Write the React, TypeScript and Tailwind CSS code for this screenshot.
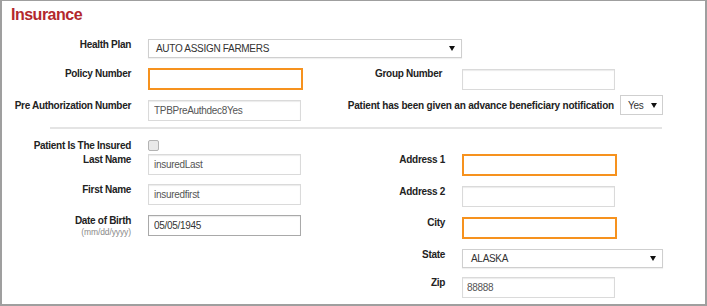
import React from "react";

const FONT = { fontFamily: '"Liberation Sans", Arial, sans-serif' };

function Label({ children, w, sub }: { children: React.ReactNode; w: string; sub?: string }) {
  return (
    <div className={`${w} shrink-0 text-right`}>
      <div className="text-[10px] leading-[11px] tracking-[-0.3px] font-bold text-[#222]">{children}</div>
      {sub && <div className="text-[8.5px] leading-[10px] tracking-[-0.1px] text-[#8a8a8a] mt-[1px]">{sub}</div>}
    </div>
  );
}

function TextBox({ value = "", orange = false, dark = false, w = "w-[153px]", pl = "pl-[5px]", color = "text-[#555]" }: { value?: string; orange?: boolean; dark?: boolean; w?: string; pl?: string; color?: string }) {
  if (orange) {
    return (
      <input
        readOnly
        defaultValue={value}
        className={`block w-[155px] h-[22px] shrink-0 border-2 border-[#f6921e] bg-white outline-none text-[10px] tracking-[-0.3px] ${pl} ${color}`}
        style={FONT}
      />
    );
  }
  return (
    <input
      readOnly
      defaultValue={value}
      className={`block ${w} h-[21px] shrink-0 border ${dark ? "border-[#a9a9a9]" : "border-[#dadada]"} bg-white outline-none text-[10px] tracking-[-0.3px] ${pl} ${color} shadow-[inset_0_1px_1px_rgba(0,0,0,0.08)]`}
      style={FONT}
    />
  );
}

function Arrow() {
  return (
    <svg width="6" height="5" viewBox="0 0 6 5" className="shrink-0">
      <path d="M0 0 L6 0 L3 5 Z" fill="#111" />
    </svg>
  );
}

function Select({ value, w, pl = "pl-[7px]", pr = "pr-[6px]" }: { value: string; w: string; pl?: string; pr?: string }) {
  return (
    <div className={`${w} h-[19px] shrink-0 border border-[#cfcfcf] bg-white flex items-center justify-between ${pl} ${pr} shadow-[0_1px_1px_rgba(0,0,0,0.06)]`}>
      <span className="text-[10px] tracking-[-0.3px] text-[#333]">{value}</span>
      <Arrow />
    </div>
  );
}

export default function App() {
  return (
    <div className="w-[707px] h-[306px] bg-white border-t border-l-2 border-r-2 border-b-2 border-[#9f9f9f] overflow-hidden" style={FONT}>
      <div className="pl-[9px] pt-[5px] text-[16px] leading-[18px] tracking-[-0.5px] font-bold text-[#b3282d]">Insurance</div>

      {/* Health Plan */}
      <div className="flex items-start mt-[15px] pl-[8px]">
        <Label w="w-[121px]">Health Plan</Label>
        <div className="ml-[17px]">
          <Select value="AUTO ASSIGN FARMERS" w="w-[314px]" />
        </div>
      </div>

      {/* Policy / Group */}
      <div className="flex items-start mt-[10px]">
        <div className="w-[311px] shrink-0 flex items-start pl-[8px]">
          <Label w="w-[121px]">Policy Number</Label>
          <div className="ml-[17px]">
            <TextBox orange />
          </div>
        </div>
        <div className="flex items-start">
          <Label w="w-[129px]">Group Number</Label>
          <div className="ml-[20px] mt-[1px]">
            <TextBox w="w-[153px]" />
          </div>
        </div>
      </div>

      {/* Pre Auth / ABN */}
      <div className="flex items-start mt-[10px]">
        <div className="w-[311px] shrink-0 flex items-start pl-[8px]">
          <Label w="w-[121px]">Pre Authorization Number</Label>
          <div className="ml-[17px]">
            <TextBox value="TPBPreAuthdec8Yes" />
          </div>
        </div>
        <div className="w-[350px] shrink-0 flex items-start justify-end">
          <div className="text-[10px] leading-[11px] tracking-[-0.2px] font-bold text-[#222]">
            Patient has been given an advance beneficiary notification
          </div>
          <div className="ml-[6px] -mt-[5px]">
            <div className="w-[43px] h-[20px] border border-[#cfcfcf] bg-white flex items-center justify-between pl-[7px] pr-[5px]">
              <span className="text-[10px] tracking-[-0.3px] text-[#333]">Yes</span>
              <Arrow />
            </div>
          </div>
        </div>
      </div>

      {/* Divider */}
      <div className="ml-[48px] w-[612px] h-[2px] bg-[#e4e4e4] mt-[6px]" />

      {/* Insured section */}
      <div className="flex items-start">
        <div className="w-[311px] shrink-0 pl-[8px]">
          <div className="flex items-start mt-[11px]">
            <Label w="w-[121px]">Patient Is The Insured</Label>
            <div className="ml-[17px] w-[11px] h-[11px] rounded-[2px] border border-[#b3b3b3] bg-[#e9e9e9]" />
          </div>
          <div className="flex items-start mt-[3px]">
            <Label w="w-[121px]">Last Name</Label>
            <div className="ml-[17px]">
              <TextBox value="insuredLast" />
            </div>
          </div>
          <div className="flex items-start mt-[9px]">
            <Label w="w-[121px]">First Name</Label>
            <div className="ml-[17px]">
              <TextBox value="insuredfirst" />
            </div>
          </div>
          <div className="flex items-start mt-[10px]">
            <Label w="w-[121px]" sub="(mm/dd/yyyy)">Date of Birth</Label>
            <div className="ml-[17px]">
              <TextBox value="05/05/1945" dark color="text-[#333]" />
            </div>
          </div>
        </div>

        <div className="shrink-0">
          <div className="flex items-start mt-[25px]">
            <Label w="w-[132px]">Address 1</Label>
            <div className="ml-[17px]">
              <TextBox orange />
            </div>
          </div>
          <div className="flex items-start mt-[10px]">
            <Label w="w-[132px]">Address 2</Label>
            <div className="ml-[17px]">
              <TextBox />
            </div>
          </div>
          <div className="flex items-start mt-[10px]">
            <Label w="w-[132px]">City</Label>
            <div className="ml-[17px]">
              <TextBox orange />
            </div>
          </div>
          <div className="flex items-start mt-[10px]">
            <Label w="w-[132px]">State</Label>
            <div className="ml-[17px]">
              <Select value="ALASKA" w="w-[201px]" pl="pl-[8px]" />
            </div>
          </div>
          <div className="flex items-start mt-[9px]">
            <Label w="w-[132px]">Zip</Label>
            <div className="ml-[17px]">
              <TextBox value="88888" pl="pl-[4px]" />
            </div>
          </div>
        </div>
      </div>
    </div>
  );
}
